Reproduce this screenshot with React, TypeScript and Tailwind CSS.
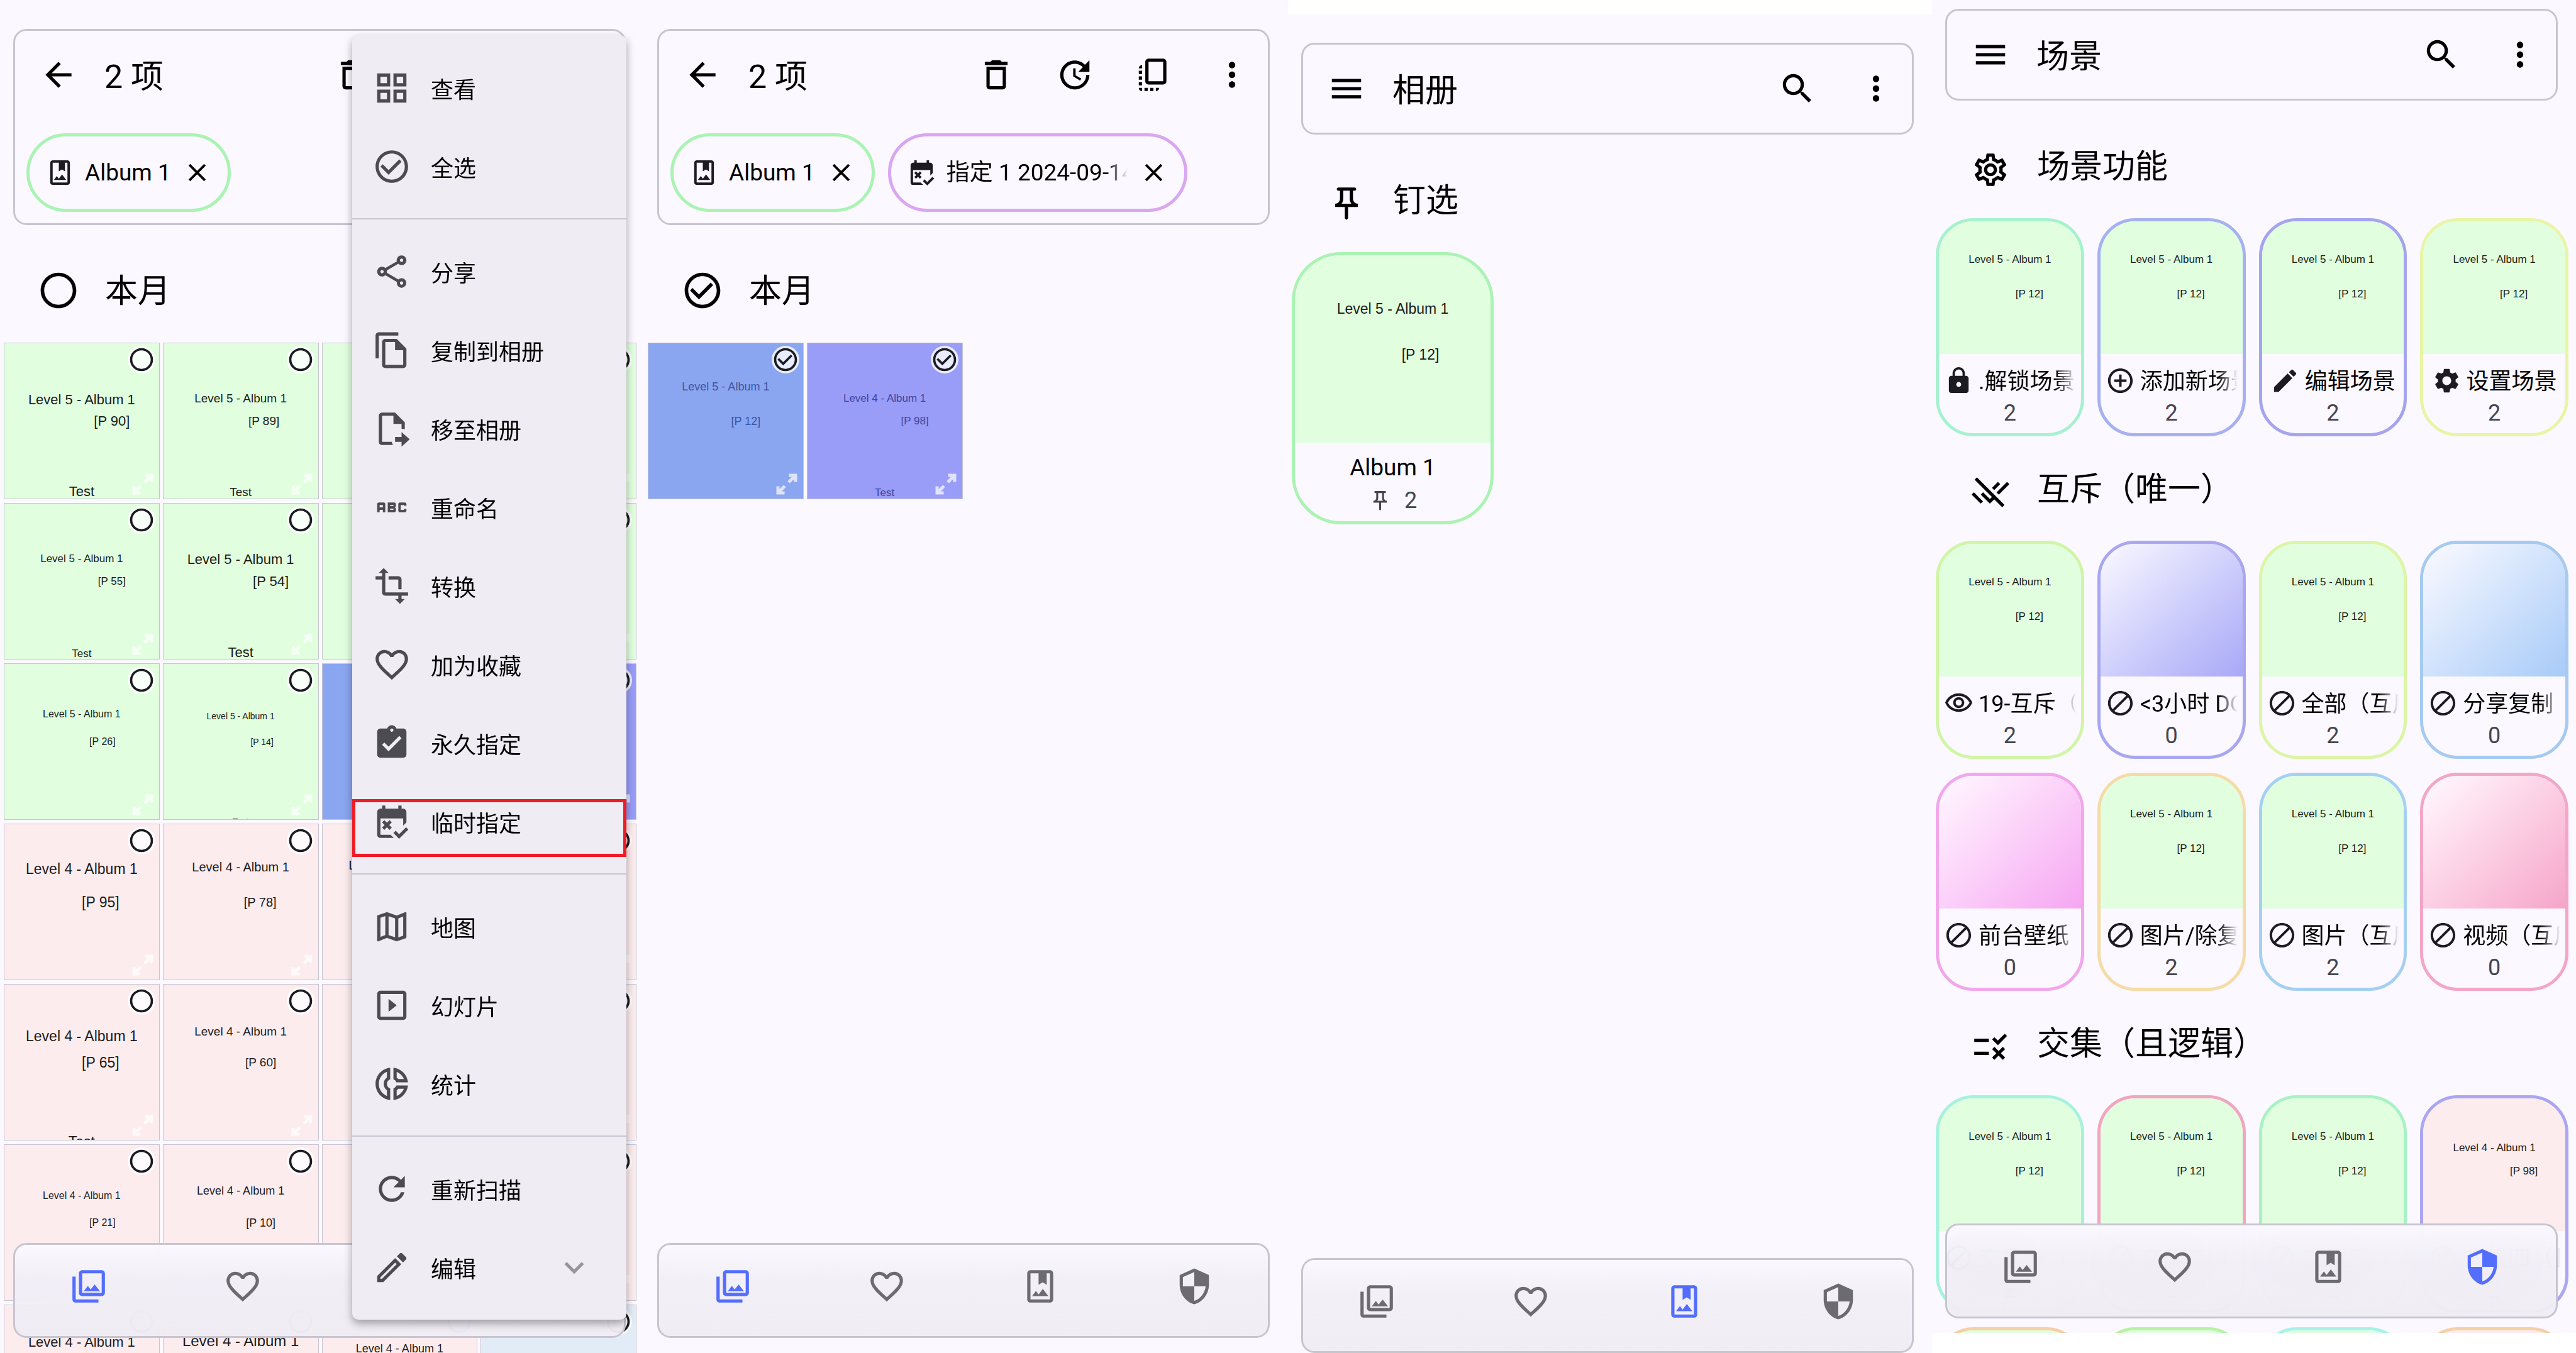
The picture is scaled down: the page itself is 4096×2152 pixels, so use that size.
import type { ReactNode } from "react";
import {
  MdAbc,
  MdAddCircleOutline,
  MdArrowBack,
  MdAssignmentTurnedIn,
  MdCheckCircleOutline,
  MdClose,
  MdDoNotDisturbAlt,
  MdEdit,
  MdExpandMore,
  MdFavoriteBorder,
  MdFreeCancellation,
  MdLock,
  MdMenu,
  MdMoreVert,
  MdOutlineDelete,
  MdOutlineDonutSmall,
  MdOutlineEdit,
  MdOutlineFileCopy,
  MdOutlineGridView,
  MdOutlineMap,
  MdOutlinePhotoAlbum,
  MdOutlinePhotoLibrary,
  MdOutlinePushPin,
  MdOutlineSettings,
  MdOutlineShare,
  MdOutlineSlideshow,
  MdOutlineVisibility,
  MdRadioButtonUnchecked,
  MdRefresh,
  MdRemoveDone,
  MdRule,
  MdSearch,
  MdSecurity,
  MdSettings,
  MdUpdate,
} from "react-icons/md";

type IconComponent = (p: { className?: string }) => ReactNode;

const FileMoveIcon: IconComponent = ({ className }) => (
  <svg viewBox="0 0 24 24" fill="currentColor" className={className}>
    <path d="M14 17H18V14L23 18.5L18 23V20H14V17M6 2C4.89 2 4 2.9 4 4V20C4 21.11 4.89 22 6 22H12.8C12.4 21.4 12.1 20.7 12 20H6V4H13V9H18V12C18.7 12 19.4 12.1 20 12.3V8L14 2H6Z" />
  </svg>
);

const TransformIcon: IconComponent = ({ className }) => (
  <svg viewBox="0 0 24 24" fill="currentColor" className={className}>
    <path d="M22 18v-2H8V4h2L7 1 4 4h2v2H2v2h4v8c0 1.100.9 2 2 2h8v2h-2l3 3 3-3h-2v-2h4zM10 8h6v6h2V8c0-1.100-.9-2-2-2h-6v2z" />
  </svg>
);

const FlipIcon: IconComponent = ({ className }) => (
  <svg viewBox="0 0 24 24" fill="currentColor" className={className}>
    <path d="M9 2C7.900 2 7 2.900 7 4V16C7 17.100 7.900 18 9 18H18C19.100 18 20 17.100 20 16V4C20 2.900 19.100 2 18 2H9ZM9 4H18V16H9V4Z" />
    <path d="M3 8C3 6.900 3.900 6 5 6V8H3ZM3 9.500H5V11.500H3V9.500ZM3 13H5V15H3V13ZM3 16.500H5V18.500H3V16.500ZM3 20H5V22C3.900 22 3 21.100 3 20ZM6.500 20H8.500V22H6.500V20ZM10 20H12V22H10V20ZM13.500 20H15.500C15.500 21.100 14.600 22 13.500 22V20Z" />
  </svg>
);

const ExpandArrows = () => (
  <svg viewBox="0 0 34 34" fill="none" stroke="currentColor" strokeWidth="5" className="size-[34px]">
    <path d="M20.500 3H31V13.500M30.500 3.500L20 14M13.500 31H3V20.500M3.500 30.500L14 20" />
  </svg>
);

/* ---------- app bar ---------- */

type Action = { icon: IconComponent; label: string };

function IconButton({ icon: Icon, label }: Action) {
  return (
    <button type="button" aria-label={label} className="flex size-[125px] items-center justify-center">
      <Icon className="size-[62px]" />
    </button>
  );
}

function AppBar({
  leading,
  title,
  actions,
  children,
}: {
  leading: Action;
  title: string;
  actions: Action[];
  children?: ReactNode;
}) {
  const Leading = leading.icon;
  return (
    <header className="ml-[21px] mr-[29px] rounded-[21px] border-[3px] border-[#c7c5d0]">
      <div className="flex h-[140px] items-center pl-[38px]">
        <button type="button" aria-label={leading.label}>
          <Leading className="size-[62px]" />
        </button>
        <h1 className="ml-[42px] grow pt-2 text-[52px] leading-[60px]">{title}</h1>
        <div className="-mr-[5px] flex">
          {actions.map((a) => (
            <IconButton key={a.label} icon={a.icon} label={a.label} />
          ))}
        </div>
      </div>
      {children}
    </header>
  );
}

function Chip({ icon: Icon, text, border, fade }: { icon: IconComponent; text: string; border: string; fade?: boolean }) {
  return (
    <div className={`flex h-[125px] items-center rounded-full border-[5px] px-[25px] ${border}`}>
      <Icon className="size-[47px] text-[#1b1b21]" />
      <span
        className={`ml-4 mr-[18px] overflow-hidden whitespace-nowrap text-[37px] leading-[48px] ${
          fade ? "w-[288px] [mask-image:linear-gradient(to_left,transparent,black_32px)]" : ""
        }`}
      >
        {text}
      </span>
      <button type="button" aria-label={`移除 ${text}`}>
        <MdClose className="size-[47px]" />
      </button>
    </div>
  );
}

const Chips = ({ children }: { children: ReactNode }) => (
  <div className="flex gap-[21px] px-[18px] pb-[18px] pt-[23px]">{children}</div>
);

function SectionHeader({ icon: Icon, title, large }: { icon: IconComponent; title: string; large?: boolean }) {
  return (
    <div className="flex h-[166px] items-center">
      <span className="ml-[53px] flex w-20 justify-center">
        <Icon className={large ? "size-[68px]" : "mt-3 size-[62px]"} />
      </span>
      <h2 className="ml-[34px] pt-1 text-[52px] leading-[60px]">{title}</h2>
    </div>
  );
}

/* ---------- thumbnails ---------- */

type Page = {
  level: string;
  page: string;
  size: string;
  y: number;
  shift: number;
  test?: number;
};

/** The captions printed on a sample picture; `mid` is the vertical centre of the page number. */
function PageText({ level, page, size, y, shift, test, mid }: Page & { mid: number }) {
  return (
    <div className={`flex flex-col items-center whitespace-nowrap font-['Liberation_Sans',sans-serif] leading-6 ${size}`}>
      <span style={{ marginTop: y - 12 }}>{level}</span>
      <span style={{ marginTop: mid - y - 24, paddingLeft: shift * 2 }}>{page}</span>
      {test ? <span style={{ marginTop: test - mid - 24 }}>Test</span> : null}
    </div>
  );
}

type Tile = { bg: string; text?: Page; tint?: string; checked?: boolean };

const L5 = "Level 5 - Album 1";
const L4 = "Level 4 - Album 1";
const GREEN = "bg-[#e1ffdf]";
const PINK = "bg-[#fcecee]";
const BLUE = "bg-[#8ba6f0]";
const VIOLET = "bg-[#999df8]";

const t = (level: string, n: number, size: string, y: number, shift: number, test?: number): Page => ({
  level,
  page: `[P ${n}]`,
  size,
  y,
  shift,
  test,
});

const tiles: Tile[] = [
  { bg: GREEN, text: t(L5, 90, "text-[22px]", 90, 48, 236) },
  { bg: GREEN, text: t(L5, 89, "text-[19px]", 88, 37, 237) },
  { bg: GREEN },
  { bg: GREEN },
  { bg: GREEN, text: t(L5, 55, "text-[17px]", 88, 48, 239) },
  { bg: GREEN, text: t(L5, 54, "text-[22px]", 89, 48, 237) },
  { bg: GREEN },
  { bg: GREEN },
  { bg: GREEN, text: t(L5, 26, "text-[16px]", 80, 33) },
  { bg: GREEN, text: t(L5, 14, "text-[14px]", 83, 34, 251) },
  { bg: BLUE },
  { bg: VIOLET },
  { bg: PINK, text: t(L4, 95, "text-[23px]", 71, 30) },
  { bg: PINK, text: t(L4, 78, "text-[20px]", 68, 31) },
  { bg: PINK, text: t(L4, 77, "text-[21px]", 65, 31) },
  { bg: PINK },
  { bg: PINK, text: t(L4, 65, "text-[23px]", 82, 30, 250) },
  { bg: PINK, text: t(L4, 60, "text-[19px]", 75, 32) },
  { bg: PINK },
  { bg: PINK },
  { bg: PINK, text: t(L4, 21, "text-[16px]", 81, 33) },
  { bg: PINK, text: t(L4, 10, "text-[18px]", 73, 32) },
  { bg: PINK },
  { bg: PINK },
  { bg: PINK, text: t(L4, 9, "text-[22px]", 59, 32) },
  { bg: PINK, text: t(L4, 8, "text-[24px]", 57, 32) },
  { bg: PINK, text: t(L4, 7, "text-[18px]", 69, 32) },
  { bg: "bg-[#e2ecf6]" },
];

const picked: Tile[] = [
  { bg: BLUE, tint: "text-[#3d55a5]", checked: true, text: t(L5, 12, "text-[18px]", 69, 32) },
  { bg: VIOLET, tint: "text-[#41449f]", checked: true, text: t(L4, 98, "text-[17px]", 88, 48, 238) },
];

function TileGrid({ items }: { items: Tile[] }) {
  return (
    <ul className="grid grid-cols-4 gap-x-[5px] gap-y-[6px] pl-1.5 pr-3">
      {items.map((tile, i) => {
        const Mark = tile.checked ? MdCheckCircleOutline : MdRadioButtonUnchecked;
        return (
          <li
            key={i}
            className={`relative h-[249px] overflow-hidden border border-[#c7c5d0] ${tile.bg} ${tile.tint ?? "text-[#1b1b1b]"}`}
          >
            {tile.text ? <PageText {...tile.text} mid={124} /> : null}
            <label className="absolute right-1.5 top-1 rounded-full bg-white/80 text-[#1b1b21]">
              <input type="checkbox" aria-label="选择" defaultChecked={tile.checked} className="sr-only" />
              <Mark className="size-[44px]" />
            </label>
            <button type="button" aria-label="全屏" className="absolute bottom-1.5 right-[9px] text-white/70">
              <ExpandArrows />
            </button>
          </li>
        );
      })}
    </ul>
  );
}

/* ---------- filter cards ---------- */

type Card = {
  border: string;
  fill: string;
  icon: IconComponent;
  label: string;
  count: number;
  text?: Page;
  fade?: boolean;
};

const p12 = t(L5, 12, "text-[17px]", 61, 31);
const p98 = t(L4, 98, "text-[17px]", 79, 47);

const functions: Card[] = [
  { border: "border-[#a6f2cf]", fill: GREEN, text: p12, icon: MdLock, label: ".解锁场景", count: 2, fade: true },
  { border: "border-[#a5b1f0]", fill: GREEN, text: p12, icon: MdAddCircleOutline, label: "添加新场景", count: 2, fade: true },
  { border: "border-[#a5a4ee]", fill: GREEN, text: p12, icon: MdEdit, label: "编辑场景", count: 2 },
  { border: "border-[#e9f5a6]", fill: GREEN, text: p12, icon: MdSettings, label: "设置场景", count: 2 },
];

const exclusive: Card[] = [
  { border: "border-[#d0f5a6]", fill: GREEN, text: p12, icon: MdOutlineVisibility, label: "19-互斥（唯一）", count: 2, fade: true },
  {
    border: "border-[#a8a7f0]",
    fill: "bg-linear-to-br from-[#fbf9ff] to-[#a9a8f7]",
    icon: MdDoNotDisturbAlt,
    label: "<3小时 DCIM",
    count: 0,
    fade: true,
  },
  { border: "border-[#dcf5a6]", fill: GREEN, text: p12, icon: MdDoNotDisturbAlt, label: "全部（互斥）", count: 2, fade: true },
  {
    border: "border-[#a6caf0]",
    fill: "bg-linear-to-br from-[#fbfaff] to-[#a8cbf8]",
    icon: MdDoNotDisturbAlt,
    label: "分享复制（",
    count: 0,
    fade: true,
  },
  {
    border: "border-[#f2a7ec]",
    fill: "bg-linear-to-br from-[#fff9ff] to-[#f5a6f2]",
    icon: MdDoNotDisturbAlt,
    label: "前台壁纸（",
    count: 0,
    fade: true,
  },
  { border: "border-[#f5dca6]", fill: GREEN, text: p12, icon: MdDoNotDisturbAlt, label: "图片/除复制", count: 2, fade: true },
  { border: "border-[#a6d0f2]", fill: GREEN, text: p12, icon: MdDoNotDisturbAlt, label: "图片（互斥）", count: 2, fade: true },
  {
    border: "border-[#f2a6c8]",
    fill: "bg-linear-to-br from-[#fffaff] to-[#f5a5ca]",
    icon: MdDoNotDisturbAlt,
    label: "视频（互斥）",
    count: 0,
    fade: true,
  },
];

const intersection: Card[] = [
  { border: "border-[#a6f2dc]", fill: GREEN, text: p12, icon: MdDoNotDisturbAlt, label: "交集一（且）", count: 2, fade: true },
  { border: "border-[#f0a6bf]", fill: GREEN, text: p12, icon: MdDoNotDisturbAlt, label: "交集二（且）", count: 2, fade: true },
  { border: "border-[#a8f2c4]", fill: GREEN, text: p12, icon: MdDoNotDisturbAlt, label: "交集三（且）", count: 2, fade: true },
  { border: "border-[#aba6f0]", fill: PINK, text: p98, icon: MdDoNotDisturbAlt, label: "交集四（且）", count: 2, fade: true },
  { border: "border-[#f5cfa6]", fill: GREEN, icon: MdDoNotDisturbAlt, label: "交集五", count: 2 },
  { border: "border-[#b8f2a6]", fill: GREEN, icon: MdDoNotDisturbAlt, label: "交集六", count: 2 },
  { border: "border-[#a6f2ea]", fill: GREEN, icon: MdDoNotDisturbAlt, label: "交集七", count: 2 },
  { border: "border-[#f5cfa6]", fill: PINK, icon: MdDoNotDisturbAlt, label: "交集八", count: 2 },
];

function CardGrid({ items }: { items: Card[] }) {
  return (
    <div className="grid grid-cols-4 gap-x-[21px] gap-y-[22px] pl-1.5 pr-3">
      {items.map(({ icon: Icon, ...card }) => (
        <button
          type="button"
          key={card.label}
          className={`flex h-[347px] flex-col overflow-hidden rounded-[60px] border-[5px] ${card.border}`}
        >
          <span className={`block h-[211px] w-full shrink-0 text-[#1b1b1b] ${card.fill}`}>
            {card.text ? <PageText {...card.text} mid={116} /> : null}
          </span>
          <span className="flex w-full items-center justify-center gap-2 px-2 pt-4">
            <Icon className="size-[47px] shrink-0 text-[#1b1b21]" />
            <span
              className={`overflow-hidden whitespace-nowrap pt-1 text-[36px] leading-[48px] ${
                card.fade ? "grow text-left [mask-image:linear-gradient(to_left,transparent,black_32px)]" : ""
              }`}
            >
              {card.label}
            </span>
          </span>
          <span className="w-full pt-0.5 text-center text-[36px] leading-[48px] text-[#46464f]">{card.count}</span>
        </button>
      ))}
    </div>
  );
}

/* ---------- bottom navigation ---------- */

const navItems: Action[] = [
  { icon: MdOutlinePhotoLibrary, label: "图库" },
  { icon: MdFavoriteBorder, label: "收藏" },
  { icon: MdOutlinePhotoAlbum, label: "相册" },
  { icon: MdSecurity, label: "场景" },
];

function BottomNav({ active, bottom }: { active: number; bottom: string }) {
  return (
    <nav
      className={`absolute left-[21px] right-[29px] rounded-[21px] border-[3px] border-[#c7c5d0] bg-linear-to-b from-[#faf8fe]/95 via-[#f1eef6]/95 via-40% to-[#efecf3]/95 backdrop-blur-2xl ${bottom}`}
    >
      <div className="-mx-[5px] flex h-[145px]">
        {navItems.map(({ icon: Icon, label }, i) => (
          <button
            type="button"
            key={label}
            aria-label={label}
            aria-current={i === active ? "page" : undefined}
            className={`flex flex-1 items-center justify-center pb-3.5 ${i === active ? "text-[#536dfe]" : "text-[#6d6b72]"}`}
          >
            <Icon className="size-[62px]" />
          </button>
        ))}
      </div>
    </nav>
  );
}

/* ---------- popup menu ---------- */

type MenuEntry = Action & { boxed?: boolean; more?: boolean };

const menu: MenuEntry[][] = [
  [
    { icon: MdOutlineGridView, label: "查看" },
    { icon: MdCheckCircleOutline, label: "全选" },
  ],
  [
    { icon: MdOutlineShare, label: "分享" },
    { icon: MdOutlineFileCopy, label: "复制到相册" },
    { icon: FileMoveIcon, label: "移至相册" },
    { icon: MdAbc, label: "重命名" },
    { icon: TransformIcon, label: "转换" },
    { icon: MdFavoriteBorder, label: "加为收藏" },
    { icon: MdAssignmentTurnedIn, label: "永久指定" },
    { icon: MdFreeCancellation, label: "临时指定", boxed: true },
  ],
  [
    { icon: MdOutlineMap, label: "地图" },
    { icon: MdOutlineSlideshow, label: "幻灯片" },
    { icon: MdOutlineDonutSmall, label: "统计" },
  ],
  [
    { icon: MdRefresh, label: "重新扫描" },
    { icon: MdOutlineEdit, label: "编辑", more: true },
  ],
];

function PopupMenu() {
  return (
    <div
      role="menu"
      className="absolute right-7 top-[56px] w-[436px] rounded-[10px] bg-[#efecf3] py-[21px] shadow-[0_6px_14px_rgba(0,0,0,0.35)]"
    >
      {menu.map((group, g) => (
        <div key={g} role="group">
          {g > 0 ? <hr className="my-5 border-t-2 border-[#c7c5d0]" /> : null}
          {group.map(({ icon: Icon, label, boxed, more }) => (
            <button
              type="button"
              role="menuitem"
              key={label}
              className="relative flex h-[125px] w-full items-center px-8 text-left"
            >
              <Icon className="size-[62px] text-[#4c4b51]" />
              <span className="ml-[31px] grow pt-2 text-[36px] leading-[48px]">{label}</span>
              {more ? <MdExpandMore className="mr-5 size-[62px] text-[#97959c]" /> : null}
              {boxed ? <span className="absolute inset-x-0 bottom-1.5 top-[27px] border-[5px] border-[#ee1c25]" /> : null}
            </button>
          ))}
        </div>
      ))}
    </div>
  );
}

/* ---------- screens ---------- */

const Screen = ({ className, children }: { className: string; children: ReactNode }) => (
  <section className={`relative overflow-hidden bg-[#fbf8ff] ${className}`}>{children}</section>
);

const selectionActions: Action[] = [
  { icon: MdOutlineDelete, label: "删除" },
  { icon: MdUpdate, label: "重置时间" },
  { icon: FlipIcon, label: "反选" },
  { icon: MdMoreVert, label: "更多" },
];

const browseActions: Action[] = [
  { icon: MdSearch, label: "搜索" },
  { icon: MdMoreVert, label: "更多" },
];

const back: Action = { icon: MdArrowBack, label: "返回" };
const drawer: Action = { icon: MdMenu, label: "菜单" };

export default function App() {
  return (
    <main
      lang="zh-CN"
      className="grid h-screen grid-cols-4 overflow-hidden bg-white font-[Roboto,'Noto_Sans_CJK_SC',sans-serif] text-black"
    >
      <Screen className="pt-[46px]">
        <AppBar leading={back} title="2 项" actions={selectionActions}>
          <Chips>
            <Chip icon={MdOutlinePhotoAlbum} text="Album 1" border="border-[#aaf3b3]" />
          </Chips>
        </AppBar>
        <div className="pt-[21px]">
          <SectionHeader icon={MdRadioButtonUnchecked} title="本月" large />
          <TileGrid items={tiles} />
        </div>
        <BottomNav active={0} bottom="bottom-6" />
        <PopupMenu />
      </Screen>

      <Screen className="pt-[46px]">
        <AppBar leading={back} title="2 项" actions={selectionActions}>
          <Chips>
            <Chip icon={MdOutlinePhotoAlbum} text="Album 1" border="border-[#aaf3b3]" />
            <Chip icon={MdFreeCancellation} text="指定 1 2024-09-14" border="border-[#d9a6f0]" fade />
          </Chips>
        </AppBar>
        <div className="pt-[21px]">
          <SectionHeader icon={MdCheckCircleOutline} title="本月" large />
          <TileGrid items={picked} />
        </div>
        <BottomNav active={0} bottom="bottom-6" />
      </Screen>

      <Screen className="mt-[23px] pt-[45px]">
        <AppBar leading={drawer} title="相册" actions={browseActions} />
        <div className="pt-[21px]">
          <SectionHeader icon={MdOutlinePushPin} title="钉选" />
          <button
            type="button"
            className="ml-1.5 flex h-[433px] w-[321px] flex-col overflow-hidden rounded-[78px] border-[5px] border-[#aaf3b3]"
          >
            <span className={`block h-[298px] w-full text-[#1b1b1b] ${GREEN}`}>
              <PageText {...t(L5, 12, "text-[23px]", 85, 44)} mid={158} />
            </span>
            <span className="w-full pt-4 text-center text-[37px] leading-[48px]">Album 1</span>
            <span className="flex w-full items-center justify-center gap-5 pt-1 text-[36px] leading-[48px] text-[#46464f]">
              <MdOutlinePushPin className="size-[37px]" />2
            </span>
          </button>
        </div>
        <BottomNav active={2} bottom="bottom-0" />
      </Screen>

      <Screen className="mb-8 pt-3.5">
        <AppBar leading={drawer} title="场景" actions={browseActions} />
        <div className="pt-[21px]">
          <SectionHeader icon={MdOutlineSettings} title="场景功能" />
          <CardGrid items={functions} />
          <SectionHeader icon={MdRemoveDone} title="互斥（唯一）" />
          <CardGrid items={exclusive} />
          <SectionHeader icon={MdRule} title="交集（且逻辑）" />
          <CardGrid items={intersection} />
        </div>
        <BottomNav active={3} bottom="bottom-[23px]" />
      </Screen>
    </main>
  );
}
